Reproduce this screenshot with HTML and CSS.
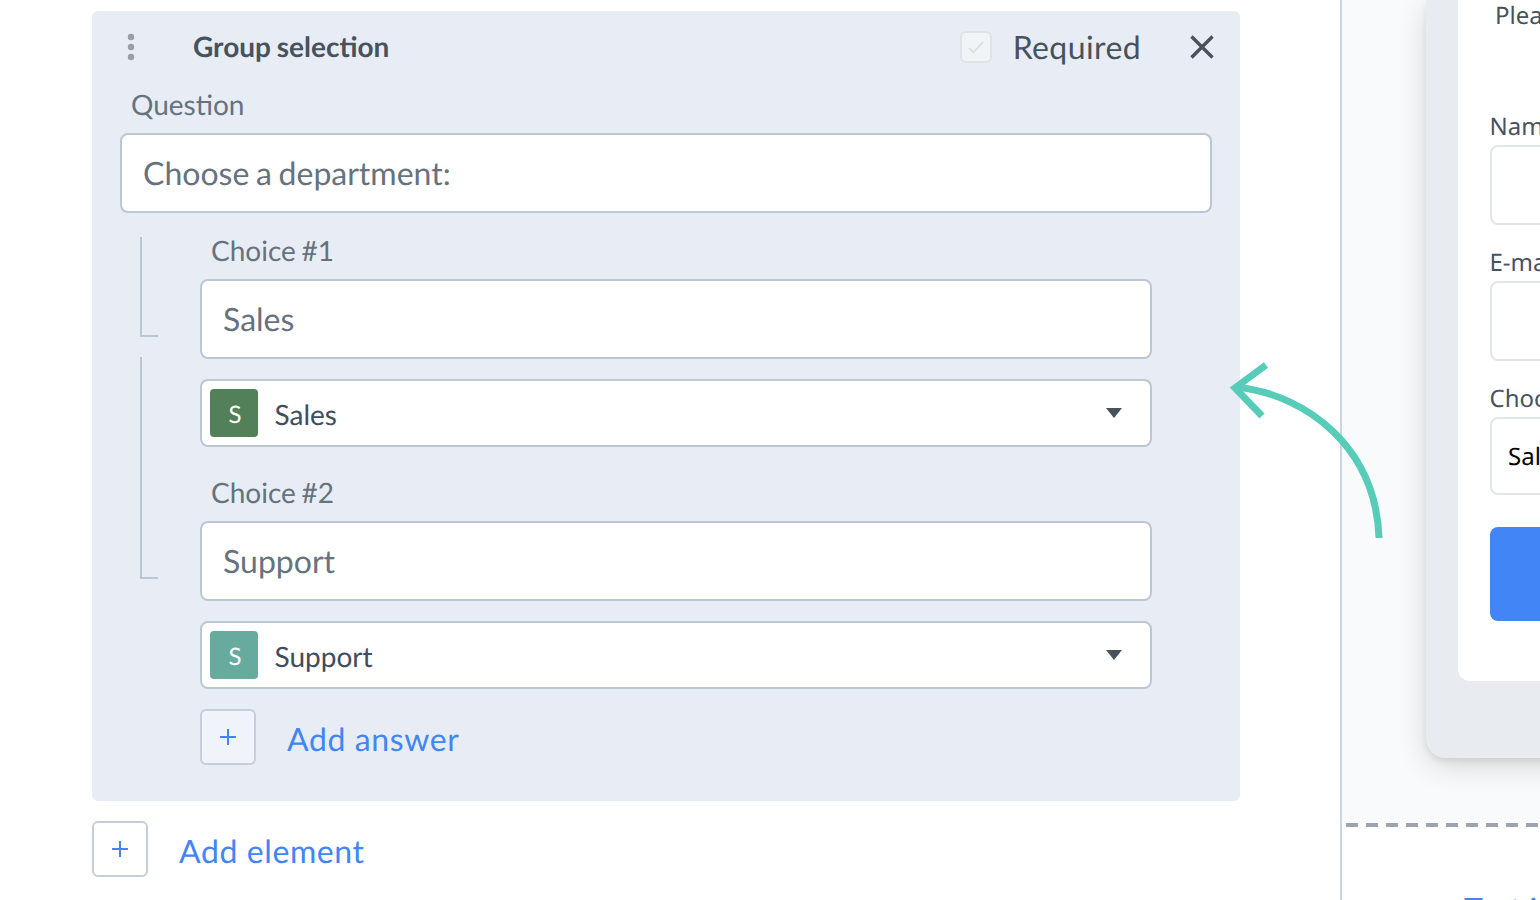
FILE: index.html
```html
<!DOCTYPE html>
<html lang="en">
<head>
<meta charset="utf-8">
<title>Group selection</title>
<link rel="stylesheet" href="styles.css">
</head>
<body>
<div class="page">
  <main class="editor">
    <section class="group">
      <header class="group-head">
        <svg class="dots" width="8" height="28" viewBox="0 0 8 28"><circle cx="4" cy="4" r="3.2"/><circle cx="4" cy="14" r="3.2"/><circle cx="4" cy="24" r="3.2"/></svg>
        <h2 class="group-title">Group selection</h2>
        <span class="check"><svg width="18" height="14" viewBox="0 0 18 14"><path d="M2 8l4.500 4.500L16 2" fill="none" stroke="#d5dcdc" stroke-width="1.500"/></svg></span>
        <span class="required">Required</span>
        <svg class="close" width="24" height="24" viewBox="0 0 24 24"><path d="M1.500 1.500l21 21M22.500 1.500l-21 21" stroke="#47525d" stroke-width="3.400" fill="none"/></svg>
      </header>
      <div class="label label-q">Question</div>
      <div class="field field-q">Choose a department:</div>
      <div class="choice choice-one">
        <div class="label">Choice #1</div>
        <div class="field">Sales</div>
        <div class="select"><span class="badge badge-green">S</span><span class="select-text">Sales</span><span class="caret"></span></div>
      </div>
      <div class="choice choice-two">
        <div class="label">Choice #2</div>
        <div class="field">Support</div>
        <div class="select"><span class="badge badge-teal">S</span><span class="select-text">Support</span><span class="caret"></span></div>
      </div>
      <div class="add add-answer">
        <span class="plus plus-tint"><svg width="16" height="16" viewBox="0 0 16 16"><path d="M8 0v16M0 8h16" stroke="#4285f4" stroke-width="2"/></svg></span>
        <span class="add-text">Add answer</span>
      </div>
    </section>
    <div class="add add-element">
      <span class="plus"><svg width="16" height="16" viewBox="0 0 16 16"><path d="M8 0v16M0 8h16" stroke="#4285f4" stroke-width="2"/></svg></span>
      <span class="add-text">Add element</span>
    </div>
  </main>
  <aside class="preview">
    <div class="stage">
      <div class="window">
        <div class="card">
          <p class="intro">Please</p>
          <div class="p-label p-name">Name</div>
          <div class="p-input"></div>
          <div class="p-label">E-mail</div>
          <div class="p-input"></div>
          <div class="p-label">Choose</div>
          <div class="p-select">Sales</div>
          <div class="p-button"></div>
        </div>
      </div>
    </div>
    <div class="dash"></div>
    <div class="foot-link">Test it</div>
  </aside>
  <svg class="arrow" width="170" height="190" viewBox="1225 355 170 190"><path d="M1379 538C1376 450 1310 395 1236 387" fill="none" stroke="#57cdb9" stroke-width="7"/><path d="M1266 365L1235 388L1262 416" fill="none" stroke="#57cdb9" stroke-width="7"/></svg>
</div>
</body>
</html>
```
FILE: styles.css
```css
* { box-sizing: border-box; }
html, body { margin: 0; padding: 0; background: #fff; }
body { font-family: "Lato", "Liberation Sans", sans-serif; text-rendering: geometricPrecision; }
.page { position: relative; display: flex; width: 1540px; height: 900px; overflow: hidden; }

.editor { flex: 0 0 1342px; border-right: 2px solid #cbd5e0; padding: 11px 100px 0 92px; }
.group { background: #e8edf5; border-radius: 6px; height: 790px; padding: 0 28px; }
.group-head { display: flex; align-items: center; height: 72px; }
.dots { fill: #979fa8; margin-left: 7px; flex: none; }
.group-title { margin: 0 0 2px 58px; flex: 1; font-size: 28px; font-weight: 700; color: #47525d; line-height: 36px; word-spacing: -1px; }
.check { display: flex; align-items: center; justify-content: center; width: 32px; height: 32px; border: 2px solid #dee3e6; border-radius: 6px; background: #f0f4f6; }
.required { margin-left: 21px; font-size: 32px; color: #47525d; line-height: 40px; letter-spacing: .4px; }
.close { margin: 0 -2px 0 49px; }

.label { font-size: 28px; line-height: 36px; color: #66727e; word-spacing: -1.5px; }
.label-q { margin: 3px 0 11px 11px; }
.field { display: flex; align-items: center; height: 80px; padding: 0 21px 2px; background: #fff; border: 2px solid #bcc7d4; border-radius: 8px; font-size: 32px; color: #66727e; word-spacing: -1.5px; }
.choice { margin: 0 60px 0 80px; position: relative; }
.choice .label { margin: 0 0 11px 11px; }
.choice-one { margin-top: 19px; }
.choice-two { margin-top: 27px; }
.choice::before { content: ""; box-sizing: border-box; position: absolute; left: -60px; width: 18px; border-left: 2px solid #bcc7d4; border-bottom: 2px solid #bcc7d4; }
.choice-one::before { top: 5px; height: 100px; }
.choice-two::before { top: -117px; height: 222px; }
.select { display: flex; align-items: center; height: 68px; margin-top: 20px; padding: 0 8px; background: #fff; border: 2px solid #bcc7d4; border-radius: 8px; }
.badge { display: flex; align-items: center; justify-content: center; width: 48px; height: 48px; padding: 2px 0 0 2px; border-radius: 4px; color: #fff; font-size: 24px; }
.badge-green { background: #538058; }
.badge-teal { background: #66ab9d; }
.select-text { flex: 1; margin: 2px 0 0 16.500px; font-size: 28px; color: #3f4d5c; line-height: 36px; }
.caret { width: 0; height: 0; margin-right: 20px; border-left: 8px solid transparent; border-right: 8px solid transparent; border-top: 10px solid #47525d; }

.add { display: flex; align-items: center; }
.add-answer { margin: 20px 0 0 80px; }
.add-element { margin-top: 20px; }
.plus { display: flex; align-items: center; justify-content: center; width: 56px; height: 56px; background: #fff; border: 2px solid #c5ceda; border-radius: 6px; }
.plus-tint { background: #f0f4fa; }
.add-text { margin: 4px 0 0 31px; font-size: 32px; color: #4285f4; letter-spacing: .6px; line-height: 40px; }

.preview { flex: 1; min-width: 0; display: flex; flex-direction: column; }
.stage { flex: 0 0 823px; padding-left: 84px; background: #f9fafc; overflow: hidden; }
.window { width: 400px; height: 758px; padding-left: 32px; background: #e8ecf1; border-radius: 0 0 0 20px; box-shadow: 0 4px 6px rgba(0, 0, 0, .07), 0 8px 30px rgba(0, 0, 0, .14); }
.card { width: 400px; height: 681px; padding-left: 32px; background: #fff; border-radius: 0 0 0 12px; font-family: "Noto Sans", sans-serif; }
.intro { margin: 0; padding: 0 0 0 5px; font-size: 24px; line-height: 32px; color: #47525d; white-space: nowrap; }
.p-label { font-size: 24px; line-height: 32px; height: 36px; padding-top: 2px; margin-left: -.5px; color: #47525d; }
.p-name { margin-top: 77px; }
.p-input { width: 400px; height: 80px; margin-bottom: 20px; border: 2px solid #e2e6ea; border-radius: 8px; background: #fff; }
.p-select { display: flex; align-items: center; width: 400px; height: 78px; padding-left: 16px; border: 2px solid #e2e6ea; border-radius: 8px; font-size: 24px; color: #000; }
.p-button { width: 400px; height: 94px; margin-top: 32px; border-radius: 8px; background: #4285f4; }

.dash { flex: 0 0 4px; margin-left: 4px; background: repeating-linear-gradient(90deg, #9aa5b1 0, #9aa5b1 12px, transparent 12px, transparent 20px); }
.foot-link { margin: 62px 0 0 122px; font-size: 32px; line-height: 40px; color: #4285f4; white-space: nowrap; }

.arrow { position: absolute; left: 1225px; top: 355px; }
```
